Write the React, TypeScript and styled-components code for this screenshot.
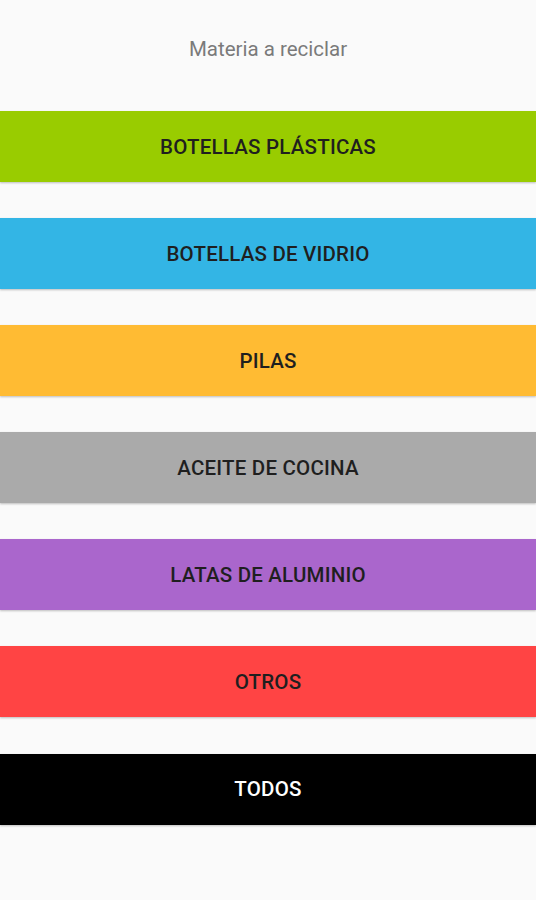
import React from "react"
import styled, { createGlobalStyle } from "styled-components"

const categories = [
  { label: "BOTELLAS PLÁSTICAS", bg: "#99cc00", fg: "#1f1f1f" },
  { label: "BOTELLAS DE VIDRIO", bg: "#33b5e5", fg: "#1f1f1f" },
  { label: "PILAS", bg: "#ffbb33", fg: "#1f1f1f" },
  { label: "ACEITE DE COCINA", bg: "#aaaaaa", fg: "#1f1f1f" },
  { label: "LATAS DE ALUMINIO", bg: "#aa66cc", fg: "#1f1f1f" },
  { label: "OTROS", bg: "#ff4444", fg: "#1f1f1f" },
  { label: "TODOS", bg: "#000000", fg: "#ffffff" },
]

export default function App() {
  return (
    <>
      <GlobalStyle />
      <Screen>
        <Title>Materia a reciclar</Title>
        <List>
          {categories.map((c) => (
            <CategoryButton key={c.label} bg={c.bg} fg={c.fg}>
              {c.label}
            </CategoryButton>
          ))}
        </List>
      </Screen>
    </>
  )
}

const GlobalStyle = createGlobalStyle`
  html, body {
    margin: 0;
    padding: 0;
    background: #fafafa;
  }
`
const Screen = styled.div`
  width: 536px;
  min-height: 900px;
  background: #fafafa;
  font-family: Roboto, "Noto Sans", sans-serif;
  display: flex;
  flex-direction: column;
`
const Title = styled.h1`
  margin: 0;
  padding: 37px 0 0 0;
  height: 74px;
  box-sizing: border-box;
  font-size: 20.5px;
  font-weight: 400;
  line-height: 24px;
  color: #7a7a7a;
  text-align: center;
`
const List = styled.div`
  display: flex;
  flex-direction: column;
  gap: 36.1px;
  margin-top: 37px;
`
type ButtonProps = {
  bg: string
  fg: string
}
const CategoryButton = styled.div<ButtonProps>`
  height: 71px;
  display: flex;
  align-items: center;
  justify-content: center;
  background: ${(props) => props.bg};
  color: ${(props) => props.fg};
  font-size: 20.5px;
  font-weight: 500;
  letter-spacing: 0.01em;
  box-shadow: 0 1px 2px rgba(0, 0, 0, 0.25);
`
